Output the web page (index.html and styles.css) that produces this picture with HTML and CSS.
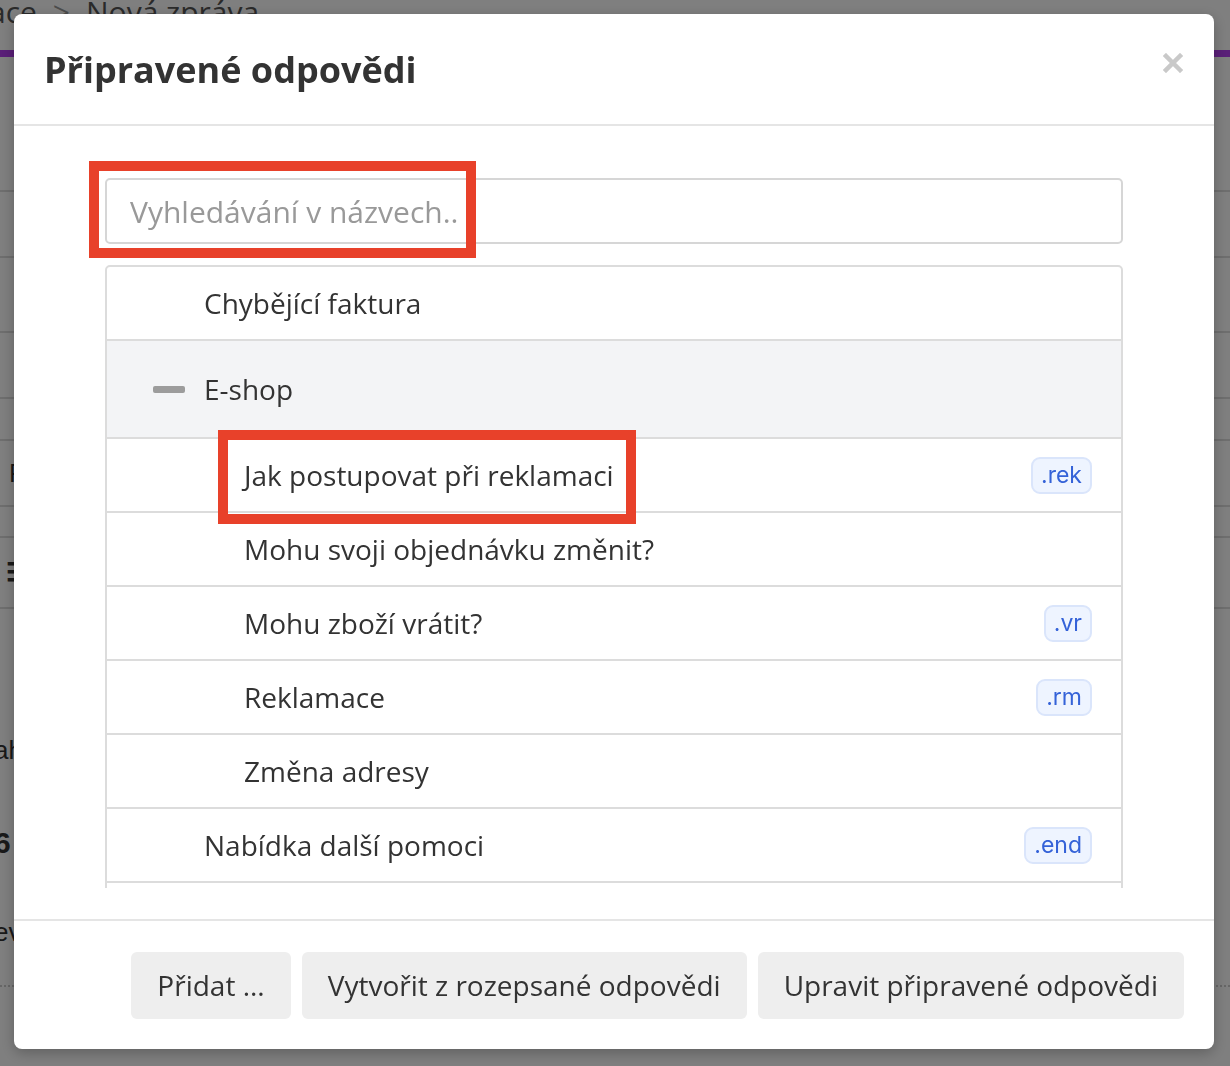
FILE: index.html
```html
<html>

<head>
    <meta charset="utf-8">
    <link rel="stylesheet" href="styles.css">
</head>

<body>
    <!-- Page under the dialog -->
    <div class="page">
        <div class="breadcrumb">
            <span>Konverzace</span>
            <span class="crumb-sep">&gt;</span>
            <span>Nová zpráva</span>
        </div>
        <div class="page-tabs"></div>
        <div class="page-row" style="height: 135px"></div>
        <div class="page-row" style="height: 66px"></div>
        <div class="page-row" style="height: 75px"></div>
        <div class="page-row" style="height: 66px"></div>
        <div class="page-row" style="height: 42px"></div>
        <div class="page-row" style="height: 66px"><span class="page-label">Firma</span></div>
        <div class="page-row" style="height: 31px"></div>
        <div class="page-row" style="height: 71px"><span class="page-icon">☰</span></div>
        <div class="page-text">
            <p>ahoj,</p>
            <p class="strong">6</p>
            <p>everything</p>
        </div>
        <div class="page-dotted"></div>
    </div>

    <div class="backdrop"></div>

    <!-- Prepared replies dialog -->
    <div class="modal">
        <div class="modal-header">
            <h2 class="modal-title">Připravené odpovědi</h2>
            <button class="modal-close" aria-label="Zavřít">
                <svg width="20" height="20" viewBox="0 0 20 20">
                    <path d="M3 3 L17 17 M17 3 L3 17" stroke="#c9c9c9" stroke-width="4.5" stroke-linecap="square" />
                </svg>
            </button>
        </div>

        <div class="modal-body">
            <input class="search" type="text" placeholder="Vyhledávání v názvech..">
            <div class="list-scroll">
                <ul class="reply-list">
                    <li class="reply">Chybějící faktura</li>
                    <li class="reply folder"><span class="folder-toggle"></span>E-shop</li>
                    <li class="reply child">Jak postupovat při reklamaci <span class="shortcut">.rek</span></li>
                    <li class="reply child">Mohu svoji objednávku změnit?</li>
                    <li class="reply child">Mohu zboží vrátit? <span class="shortcut">.vr</span></li>
                    <li class="reply child">Reklamace <span class="shortcut">.rm</span></li>
                    <li class="reply child">Změna adresy</li>
                    <li class="reply">Nabídka další pomoci <span class="shortcut">.end</span></li>
                    <li class="reply">Poděkování</li>
                    <li class="reply">Uvítání</li>
                </ul>
            </div>
        </div>

        <div class="modal-footer">
            <button class="btn">Přidat ...</button>
            <button class="btn">Vytvořit z rozepsané odpovědi</button>
            <button class="btn">Upravit připravené odpovědi</button>
        </div>
    </div>

    <!-- highlight frames -->
    <div class="mark mark-search"></div>
    <div class="mark mark-item"></div>
</body>

</html>
```

FILE: styles.css
```css
* {
    margin: 0;
    padding: 0;
    box-sizing: border-box;
}

body {
    font-family: "Open Sans", "Liberation Sans", sans-serif;
    color: #333;
    background: #fff;
    width: 1230px;
    height: 1066px;
    overflow: hidden;
}

/* page under the dialog */

.page {
    width: 1230px;
}

.breadcrumb {
    height: 50px;
    margin-left: -124px;
    margin-top: -6px;
    margin-bottom: 6px;
    font-size: 30px;
    color: #555;
    line-height: 36px;
    display: flex;
    white-space: nowrap;
}

.crumb-sep {
    color: #999;
    margin: 0 16px;
}

.page-tabs {
    height: 7px;
    background: #b43ef0;
}

.page-row {
    border-bottom: 2px solid #dcdcdc;
    display: flex;
    align-items: center;
    padding-left: 9px;
    font-family: "Liberation Sans", sans-serif;
    font-size: 26px;
    color: #333;
}

.page-icon {
    margin-left: -3px;
    font-weight: bold;
}

.page-text {
    padding-top: 126px;
    font-family: "Liberation Sans", sans-serif;
    font-size: 26px;
    color: #333;
    margin-left: -6px;
}

.page-text p {
    height: 91px;
}

.strong {
    font-weight: bold;
    font-size: 30px;
}

.page-dotted {
    margin-top: -23px;
    border-top: 2px dotted #ccc;
}

.backdrop {
    position: fixed;
    inset: 0;
    background: rgba(0, 0, 0, 0.5);
}

/* dialog */

.modal {
    position: fixed;
    left: 14px;
    top: 14px;
    width: 1200px;
    height: 1035px;
    background: #fff;
    border-radius: 8px;
    box-shadow: 0 4px 14px rgba(0, 0, 0, 0.25);
    display: flex;
    flex-direction: column;
}

.modal-header {
    height: 112px;
    border-bottom: 2px solid #e5e5e5;
    display: flex;
    align-items: center;
    justify-content: space-between;
    padding: 0 31px 0 30px;
}

.modal-title {
    font-size: 36px;
    font-weight: bold;
    color: #333;
}

.modal-close {
    border: none;
    background: none;
    width: 20px;
    height: 20px;
    margin-bottom: 12px;
    display: flex;
}

.modal-body {
    flex: 1;
    padding: 52px 91px 0 91px;
    display: flex;
    flex-direction: column;
    min-height: 0;
}

.search {
    height: 66px;
    border: 2px solid #d6d6d6;
    border-radius: 5px;
    padding: 0 23px;
    font-family: "Open Sans", sans-serif;
    font-size: 30px;
    color: #333;
    outline: none;
}

.search::placeholder {
    color: #999;
}

.list-scroll {
    margin-top: 21px;
    height: 623px;
    overflow: hidden;
}

.reply-list {
    list-style: none;
    border: 2px solid #dcdcdc;
    border-radius: 5px 5px 0 0;
}

.reply {
    height: 74px;
    border-bottom: 2px solid #dcdcdc;
    display: flex;
    align-items: center;
    padding-left: 97px;
    padding-right: 29px;
    font-size: 28px;
    color: #333;
}

.reply.child {
    padding-left: 137px;
}

.folder {
    height: 98px;
    background: #f3f4f6;
    padding-left: 46px;
}

.folder-toggle {
    width: 32px;
    height: 7px;
    border-radius: 2px;
    background: #9c9c9c;
    margin-right: 19px;
}

.shortcut {
    margin-left: auto;
    height: 37px;
    padding: 0 8px;
    border: 2px solid #dae5fb;
    border-radius: 9px;
    background: #eef4ff;
    color: #3462d8;
    font-family: Inter, "Noto Sans", sans-serif;
    font-size: 23px;
    display: flex;
    align-items: center;
}

.modal-footer {
    height: 130px;
    border-top: 2px solid #e5e5e5;
    display: flex;
    justify-content: flex-end;
    align-items: center;
    gap: 11px;
    padding: 0 30px 0 0;
}

.btn {
    height: 67px;
    padding: 0 26px;
    border: none;
    border-radius: 6px;
    background: #eee;
    color: #333;
    font-family: "Open Sans", sans-serif;
    font-size: 28px;
}

/* highlight frames drawn over the dialog */

.mark {
    position: fixed;
    border: 10px solid #e8412a;
}

.mark-search {
    left: 89px;
    top: 161px;
    width: 387px;
    height: 97px;
}

.mark-item {
    left: 218px;
    top: 430px;
    width: 418px;
    height: 94px;
}
```
